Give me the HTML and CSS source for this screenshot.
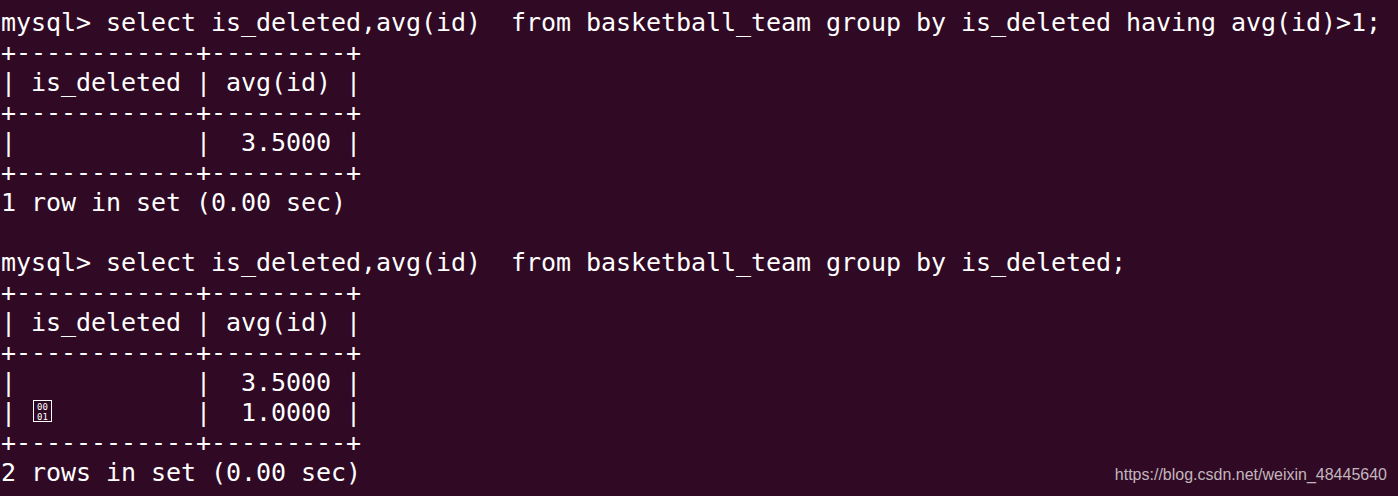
FILE: index.html
```html
<!DOCTYPE html>
<html>
<head>
<meta charset="utf-8">
<link rel="stylesheet" href="styles.css">
</head>
<body>
<div class="screen">
<pre class="term">mysql&gt; select is_deleted,avg(id)  from basketball_team group by is_deleted having avg(id)&gt;1;
+------------+---------+
| is_deleted | avg(id) |
+------------+---------+
|            |  3.5000 |
+------------+---------+
1 row in set (0.00 sec)

mysql&gt; select is_deleted,avg(id)  from basketball_team group by is_deleted;
+------------+---------+
| is_deleted | avg(id) |
+------------+---------+
|            |  3.5000 |
| <span class="tofu"><span class="tofu-row">00</span><span class="tofu-row">01</span></span>          |  1.0000 |
+------------+---------+
2 rows in set (0.00 sec)</pre>
<div class="watermark">https://blog.csdn.net/weixin_48445640</div>
</div>
</body>
</html>
```
FILE: styles.css
```css
html, body {
  margin: 0;
  padding: 0;
  background: #300a24;
}
.screen {
  position: relative;
  width: 1398px;
  height: 496px;
  overflow: hidden;
  background: #300a24;
}
.term {
  margin: 0;
  padding: 8px 0 0 1px;
  font-family: "DejaVu Sans Mono", monospace;
  font-size: 25px;
  letter-spacing: -0.05px;
  line-height: 30px;
  color: #ffffff;
  white-space: pre;
}
.tofu {
  display: inline-block;
  box-sizing: border-box;
  width: 19px;
  height: 22px;
  margin-left: 2px;
  margin-right: -6px;
  padding-top: 1px;
  border: 1px solid #ffffff;
  overflow: hidden;
  vertical-align: -1px;
  font-size: 9px;
  line-height: 10px;
  letter-spacing: 0;
  text-align: center;
}
.tofu-row {
  display: block;
}
.watermark {
  position: absolute;
  right: 11px;
  top: 465px;
  font-family: "Liberation Sans", Arial, sans-serif;
  font-size: 16px;
  line-height: 20px;
  color: #c2b6be;
}
```
